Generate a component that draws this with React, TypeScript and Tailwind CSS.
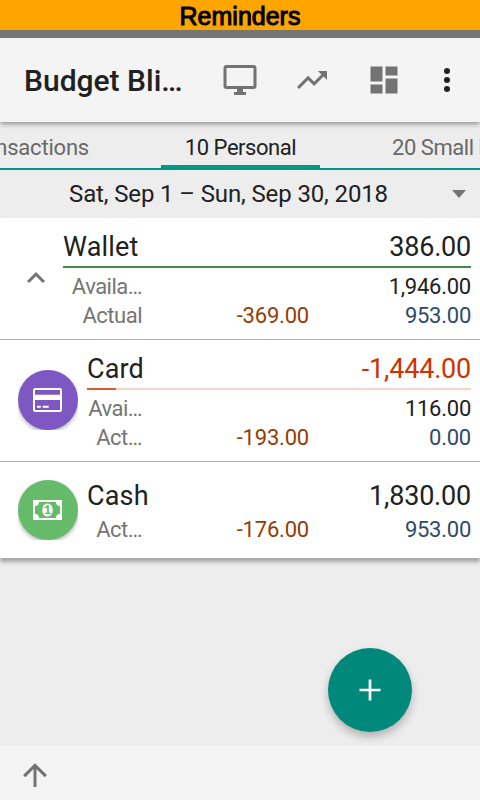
import type { ReactNode } from 'react';

const font = "font-['Roboto','Liberation_Sans',sans-serif]";

function ToolIcon({ d }: { d: string }) {
  return (
    <svg className="size-9 shrink-0" viewBox="0 0 24 24" fill="#737373">
      <path d={d} />
    </svg>
  );
}

function CardIcon() {
  return (
    <svg className="mr-px h-6 w-[29px]" viewBox="0 0 29 24" fill="none">
      <rect x="1" y="1" width="27" height="22" rx="1.2" stroke="#fff" strokeWidth="2" />
      <path fill="#fff" d="M1 6.7h27v5.3H1zM4 17.8h3.8v2H4zM9.7 17.8h6v2h-6z" />
    </svg>
  );
}

function CashIcon() {
  return (
    <svg className="mr-px h-5 w-[29px]" viewBox="0 0 29 20">
      <rect width="29" height="20" fill="#fff" />
      <path fill="#66bb6a" d="M6 2h17a4 4 0 0 0 4 4v8a4 4 0 0 0-4 4H6a4 4 0 0 0-4-4V6a4 4 0 0 0 4-4z" />
      <ellipse cx="14.5" cy="10" rx="5.2" ry="6.6" fill="#fff" />
      <text x="14.4" y="14.2" textAnchor="middle" fontSize="12.5" fontWeight="700" fontFamily="Liberation Mono, monospace" fill="#66bb6a">1</text>
    </svg>
  );
}

function Badge({ color, children }: { color: string; children: ReactNode }) {
  return (
    <div className="ml-[18px] size-[60px] shrink-0 overflow-hidden">
      <div className={`flex size-full items-center justify-center rounded-full shadow-[0_2px_4px_rgba(0,0,0,0.3)] ${color}`}>
        {children}
      </div>
    </div>
  );
}

function Head({ name, value, color = 'text-[#212121]' }: { name: string; value: string; color?: string }) {
  return (
    <div className="flex h-8 items-center justify-between text-[27px] leading-8">
      <span className="tracking-[0.15px] text-[#212121]">{name}</span>
      <span className={`tracking-[-0.2px] ${color}`}>{value}</span>
    </div>
  );
}

function Line({ label, spent, value, color = 'text-[#2f4a68]' }: { label: string; spent?: string; value: string; color?: string }) {
  return (
    <div className="flex h-[29px] items-center justify-end text-[22px] leading-[29px]">
      <span className="tracking-[-0.5px] whitespace-nowrap text-[#757575]">{label}</span>
      <span className="w-[167px] shrink-0 text-right tracking-[-0.2px] text-[#953c05]">{spent}</span>
      <span className={`w-[162px] shrink-0 text-right tracking-[-0.25px] ${color}`}>{value}</span>
    </div>
  );
}

export default function App() {
  return (
    <div className={`flex h-[800px] w-[480px] flex-col overflow-hidden bg-[#ededed] ${font}`}>
      <div className="relative z-20 h-[30px] shrink-0 bg-[#ffa500] text-center font-['Liberation_Sans',sans-serif] text-[25px] leading-[32px] text-black [-webkit-text-stroke:1px_black]">
        Reminders
      </div>
      <div className="relative z-20 h-2 shrink-0 bg-[#757575]" />
      <header className="relative z-10 flex h-[84px] shrink-0 items-center bg-[#f4f4f4] pl-6 shadow-[0_2px_5px_rgba(0,0,0,0.4)]">
        <h1 className="w-[198px] text-[30px] font-medium text-[#212121]">Budget Bli…</h1>
        <div className="flex gap-9">
          <ToolIcon d="M21,16H3V4H21M21,2H3C1.89,2 1,2.89 1,4V16A2,2 0 0,0 3,18H10V20H8V22H16V20H14V18H21A2,2 0 0,0 23,16V4C23,2.89 22.1,2 21,2Z" />
          <ToolIcon d="M16,6L18.29,8.29L13.41,13.17L9.41,9.17L2,16.59L3.41,18L9.41,12L13.41,16L19.71,9.71L22,12V6H16Z" />
          <ToolIcon d="M13,3V9H21V3M13,21H21V11H13M3,21H11V15H3M3,13H11V3H3V13Z" />
        </div>
        <svg className="ml-[27px] size-9 shrink-0" viewBox="0 0 36 36" fill="#212121">
          <circle cx="18" cy="9" r="3" />
          <circle cx="18" cy="18" r="3" />
          <circle cx="18" cy="27" r="3" />
        </svg>
      </header>
      <nav className="flex h-12 shrink-0 overflow-hidden border-b-2 border-[#009688] text-[22px] leading-[51px] tracking-[-0.45px] whitespace-nowrap text-[#696969]">
        <div className="flex w-[89px] shrink-0 justify-end tracking-[-0.2px]">Transactions</div>
        <div className="ml-[72px] w-[159px] shrink-0 border-b-3 border-[#009688] text-center text-[#212121]">10 Personal</div>
        <div className="ml-[72px] w-[88px] shrink-0">20 Small business</div>
      </nav>
      <div className="flex h-12 shrink-0 items-center text-[24px] text-[#212121]">
        <span className="w-[457px] text-center tracking-[-0.13px]">Sat, Sep 1 – Sun, Sep 30, 2018</span>
        <svg className="-ml-[5px] h-[8px] w-[14px]" viewBox="0 0 14 8" fill="#757575"><path d="M0 0h14L7 8z" /></svg>
      </div>
      <main className="flex h-[340px] shrink-0 flex-col bg-white shadow-[0_4px_4px_rgba(0,0,0,0.3)]">
        <section className="flex h-[122px] items-center border-b border-[#b0b0b0] pr-[9px]">
          <svg className="mr-[9px] mb-0.5 ml-[18px] size-9 shrink-0" viewBox="0 0 24 24" fill="#757575">
            <path d="M7.41,15.41L12,10.83L16.59,15.41L18,14L12,8L6,14L7.41,15.41Z" />
          </svg>
          <div className="h-full grow pt-[13px]">
            <Head name="Wallet" value="386.00" />
            <div className="mt-[3px] mb-[4px] h-0.5 bg-[#448a48]" />
            <Line label="Availa…" value="1,946.00" color="text-[#212121]" />
            <Line label="Actual" spent="-369.00" value="953.00" />
          </div>
        </section>
        <section className="flex h-[122px] items-center border-b border-[#b0b0b0] pr-[9px]">
          <div className="mb-px"><Badge color="bg-[#7e57c2]"><CardIcon /></Badge></div>
          <div className="ml-[9px] h-full grow pt-[13px]">
            <Head name="Card" value="-1,444.00" color="text-[#cc3300]" />
            <div className="mt-[3px] mb-[4px] h-0.5 bg-[#f5d4cb]"><div className="h-full w-[29px] bg-[#d95b33]" /></div>
            <Line label="Avai…" value="116.00" color="text-[#212121]" />
            <Line label="Act…" spent="-193.00" value="0.00" />
          </div>
        </section>
        <section className="flex h-24 items-center pr-[9px]">
          <Badge color="bg-[#66bb6a]"><CashIcon /></Badge>
          <div className="ml-[9px] h-full grow pt-[18px]">
            <Head name="Cash" value="1,830.00" />
            <div className="mt-[3px]"><Line label="Act…" spent="-176.00" value="953.00" /></div>
          </div>
        </section>
      </main>
      <div className="flex grow items-end justify-end pr-[68px] pb-[14px]">
        <button className="flex size-[84px] items-center justify-center rounded-full bg-[#00897b] shadow-[0_5px_8px_rgba(0,0,0,0.25)]">
          <svg className="size-9" viewBox="0 0 24 24" fill="#fff"><path d="M19,12.9H12.9V19H11.1V12.9H5V11.1H11.1V5H12.9V11.1H19V12.9Z" /></svg>
        </button>
      </div>
      <footer className="relative flex h-[54px] shrink-0 items-center bg-[#f4f4f4] pl-[17px]">
        <svg className="mt-1 size-9" viewBox="0 0 24 24" fill="#737373">
          <path d="M13,20H11V8L5.5,13.5L4.08,12.08L12,4.16L19.92,12.08L18.5,13.5L13,8V20Z" />
        </svg>
      </footer>
    </div>
  );
}
